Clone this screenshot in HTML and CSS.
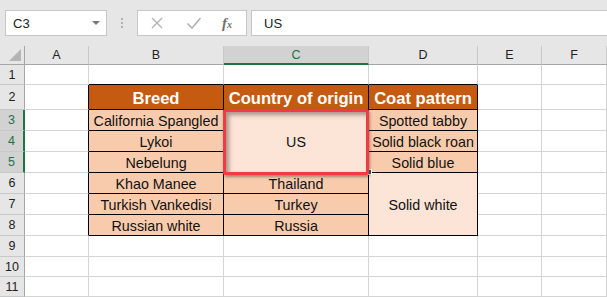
FILE: index.html
```html
<!DOCTYPE html>
<html>
  <head>
    <meta charset="UTF-8" />
    <title>Cat breeds</title>
    <link rel="stylesheet" href="styles.css">
  </head>
  <body>
    <div id="formulaBar">
      <div class="name-box">
        <span>C3</span>
        <span class="caret"></span>
      </div>
      <div class="grip"><i></i><i></i><i></i></div>
      <div class="fx-buttons">
        <svg class="ico" width="14" height="14" viewBox="0 0 14 14">
          <path d="M2 2 L12 12 M12 2 L2 12" stroke="#b3b3b3" stroke-width="1.4" fill="none" />
        </svg>
        <svg class="ico" width="16" height="14" viewBox="0 0 16 14">
          <path d="M1.5 7.5 L6 12 L14.5 2" stroke="#b3b3b3" stroke-width="1.6" fill="none" />
        </svg>
        <span class="fx">f<sub>x</sub></span>
      </div>
      <div class="formula">US</div>
    </div>

    <div id="sheet">
      <!-- column headers -->
      <div class="corner"><span class="tri"></span></div>
      <div class="ch">A</div>
      <div class="ch">B</div>
      <div class="ch sel">C</div>
      <div class="ch">D</div>
      <div class="ch">E</div>
      <div class="ch">F</div>

      <!-- 1 -->
      <div class="rh">1</div>
      <div class="c"></div>
      <div class="c tt"></div>
      <div class="c tt"></div>
      <div class="c tt"></div>
      <div class="c"></div>
      <div class="c"></div>

      <!-- 2 -->
      <div class="rh">2</div>
      <div class="c tl"></div>
      <div class="c t head">Breed</div>
      <div class="c t head">Country of origin</div>
      <div class="c t head">Coat pattern</div>
      <div class="c"></div>
      <div class="c"></div>

      <!-- 3 -->
      <div class="rh sel">3</div>
      <div class="c tl"></div>
      <div class="c t">California Spangled</div>
      <div class="c t light merged3">
        US
        <span class="mark"></span>
        <span class="handle"></span>
      </div>
      <div class="c t">Spotted tabby</div>
      <div class="c"></div>
      <div class="c"></div>

      <!-- 4 -->
      <div class="rh sel">4</div>
      <div class="c tl"></div>
      <div class="c t">Lykoi</div>
      <div class="c t">Solid black roan</div>
      <div class="c"></div>
      <div class="c"></div>

      <!-- 5 -->
      <div class="rh sel">5</div>
      <div class="c tl"></div>
      <div class="c t">Nebelung</div>
      <div class="c t">Solid blue</div>
      <div class="c"></div>
      <div class="c"></div>

      <!-- 6 -->
      <div class="rh">6</div>
      <div class="c tl"></div>
      <div class="c t">Khao Manee</div>
      <div class="c t">Thailand</div>
      <div class="c t light merged3">Solid white</div>
      <div class="c"></div>
      <div class="c"></div>

      <!-- 7 -->
      <div class="rh">7</div>
      <div class="c tl"></div>
      <div class="c t">Turkish Vankedisi</div>
      <div class="c t">Turkey</div>
      <div class="c"></div>
      <div class="c"></div>

      <!-- 8 -->
      <div class="rh">8</div>
      <div class="c tl"></div>
      <div class="c t">Russian white</div>
      <div class="c t">Russia</div>
      <div class="c"></div>
      <div class="c"></div>

      <!-- 9 -->
      <div class="rh">9</div>
      <div class="c"></div>
      <div class="c"></div>
      <div class="c"></div>
      <div class="c"></div>
      <div class="c"></div>
      <div class="c"></div>

      <!-- 10 -->
      <div class="rh">10</div>
      <div class="c"></div>
      <div class="c"></div>
      <div class="c"></div>
      <div class="c"></div>
      <div class="c"></div>
      <div class="c"></div>

      <!-- 11 -->
      <div class="rh">11</div>
      <div class="c"></div>
      <div class="c"></div>
      <div class="c"></div>
      <div class="c"></div>
      <div class="c"></div>
      <div class="c"></div>
    </div>
  </body>
</html>
```

FILE: styles.css
```css
:root {
  --chrome: #e6e6e6;
  --grid: #d4d4d4;
  --green: #217346;
  --head: #c55a11;
  --peach: #f8cbad;
  --light: #fce4d6;
  --ui-font: "Liberation Sans", Arial, sans-serif;
}
* {
  box-sizing: border-box;
}
body {
  margin: 0;
  width: 607px;
  height: 297px;
  overflow: hidden;
  background: var(--chrome);
  font-family: var(--ui-font);
}

/* formula bar */
#formulaBar {
  height: 46px;
  display: flex;
  align-items: flex-start;
  padding: 10px 0 0 5px;
}
.name-box {
  width: 102px;
  height: 26px;
  background: #fff;
  border: 1px solid #c6c6c6;
  display: flex;
  align-items: center;
  justify-content: space-between;
  padding: 0 6px 0 7px;
  font-size: 13px;
  color: #222;
}
.caret {
  width: 0;
  height: 0;
  border-left: 4px solid transparent;
  border-right: 4px solid transparent;
  border-top: 4px solid #777;
}
.grip {
  width: 30px;
  height: 26px;
  display: flex;
  flex-direction: column;
  align-items: center;
  justify-content: center;
  gap: 2px;
}
.grip i {
  width: 2px;
  height: 2px;
  background: #b0b0b0;
}
.fx-buttons {
  width: 110px;
  height: 26px;
  background: #fff;
  border: 1px solid #c6c6c6;
  display: flex;
  align-items: center;
  padding-left: 12px;
  gap: 22px;
}
.fx {
  font-family: "Liberation Serif", serif;
  font-style: italic;
  font-weight: bold;
  font-size: 15px;
  color: #707070;
  margin-left: -2px;
}
.fx sub {
  font-size: 10px;
  vertical-align: 0;
}
.formula {
  flex: 1;
  height: 26px;
  margin-left: 4px;
  background: #fff;
  border: 1px solid #c6c6c6;
  border-right: none;
  display: flex;
  align-items: center;
  padding-left: 12px;
  font-size: 13px;
  color: #222;
}

/* grid */
#sheet {
  display: grid;
  grid-template-columns: 25px 64px 135px 145px 109px 64px 65px;
  grid-template-rows: 19px 20px 25px 21px 21px 21px 21px 21px 21px 21px 20px 20px;
  width: 607px;
  background: #fff;
}
.corner {
  position: relative;
  background: var(--chrome);
  border-right: 1px solid #a6a6a6;
  border-bottom: 1px solid #a6a6a6;
}
.tri {
  position: absolute;
  right: 3px;
  bottom: 3px;
  width: 0;
  height: 0;
  border-left: 12px solid transparent;
  border-bottom: 12px solid #b4b4b4;
}
.ch {
  background: var(--chrome);
  border-right: 1px solid #c8c8c8;
  border-bottom: 1px solid #a6a6a6;
  display: flex;
  align-items: center;
  justify-content: center;
  font-size: 12.5px;
  color: #222;
}
.ch.sel {
  background: #d2d2d2;
  border-bottom: 2px solid var(--green);
  color: var(--green);
}
.rh {
  background: var(--chrome);
  border-right: 1px solid #a6a6a6;
  border-bottom: 1px solid #c8c8c8;
  display: flex;
  align-items: center;
  justify-content: center;
  font-size: 12.5px;
  color: #222;
}
.rh.sel {
  background: #d2d2d2;
  border-right: 2px solid var(--green);
  color: var(--green);
}
.c {
  position: relative;
  border-right: 1px solid var(--grid);
  border-bottom: 1px solid var(--grid);
  display: flex;
  align-items: center;
  justify-content: center;
  padding-top: 2px;
  font-family: "Liberation Sans", Arial, sans-serif;
  font-size: 14.3px;
  color: #111;
  white-space: nowrap;
}
.c.tl {
  border-right-color: #000;
}
.c.tt {
  border-bottom-color: #000;
}
.c.t {
  background: var(--peach);
  border-right-color: #000;
  border-bottom-color: #000;
}
.c.head {
  background: var(--head);
  color: #fff;
  font-weight: bold;
  font-size: 16.6px;
  padding-top: 3px;
}
.c.light {
  background: var(--light);
}
.merged3 {
  grid-row-end: span 3;
}
.mark {
  position: absolute;
  z-index: 2;
  left: -1px;
  top: -1px;
  right: -1px;
  bottom: -3px;
  border: 3px solid #f03c40;
  border-radius: 2px;
  box-shadow: inset 3px 3px 4px rgba(90, 70, 60, 0.5), 1px 2px 3px rgba(0, 0, 0, 0.35);
}
.handle {
  position: absolute;
  z-index: 1;
  right: -4px;
  bottom: -3px;
  width: 6px;
  height: 6px;
  background: var(--green);
  border: 1px solid #fff;
}
```
